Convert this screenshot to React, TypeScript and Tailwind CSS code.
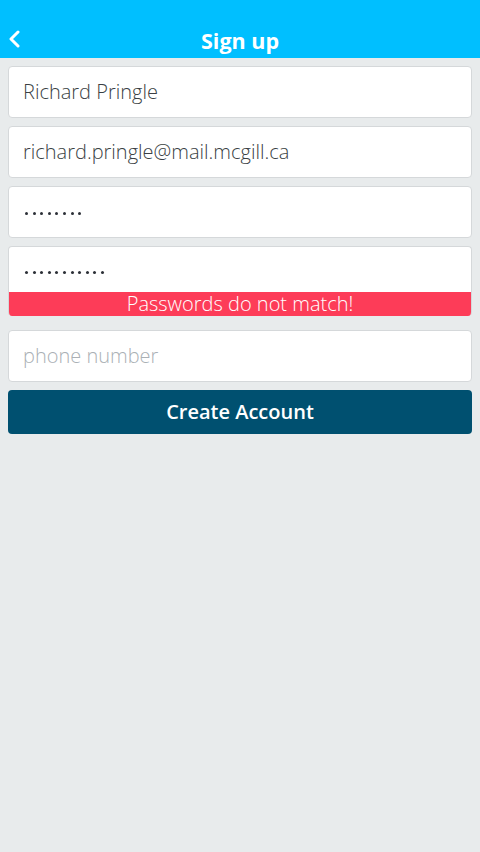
import React from "react";

const font = { fontFamily: '"Open Sans", "Noto Sans", sans-serif' };

function Field({ children, className = "" }: { children: React.ReactNode; className?: string }) {
  return (
    <div className={"h-[52px] rounded-[4px] border border-[#d5d8da] bg-white flex items-center pl-[14px] " + className}>
      {children}
    </div>
  );
}

function Dots({ n }: { n: number }) {
  return (
    <div className="flex gap-[4.6px] items-center">
      {Array.from({ length: n }).map((_, i) => (
        <span key={i} className="block w-[3px] h-[3px] rounded-full bg-[#2b2f36]" />
      ))}
    </div>
  );
}

export default function App() {
  return (
    <div className="w-[480px] h-[852px] bg-[#e8ebec] flex flex-col" style={font}>
      <div className="h-[58px] bg-[#00bfff] relative flex items-end justify-center pb-[2px]">
        <svg className="absolute left-[8px] top-[30px]" width="12" height="18" viewBox="0 0 12 18">
          <path d="M10 2 L3 9 L10 16" fill="none" stroke="white" strokeWidth="3" strokeLinecap="round" strokeLinejoin="round" />
        </svg>
        <span className="text-white font-bold text-[21.5px] leading-[30px]">Sign up</span>
      </div>
      <div className="flex flex-col px-[8px] pt-[8px]">
        <Field>
          <span className="text-[20px] font-light text-[#3a3f44]">Richard Pringle</span>
        </Field>
        <Field className="mt-[8px]">
          <span className="text-[20px] font-light text-[#3a3f44]">richard.pringle@mail.mcgill.ca</span>
        </Field>
        <Field className="mt-[8px]">
          <div className="pl-[2px] pt-[2px]"><Dots n={8} /></div>
        </Field>
        <div className="mt-[8px] rounded-[4px] border border-b-0 border-[#d5d8da] bg-white overflow-hidden">
          <div className="h-[45px] flex items-center pl-[14px] pt-[4px]">
            <div className="pl-[2px] pt-[2px]"><Dots n={11} /></div>
          </div>
          <div className="h-[24px] bg-[#fd3c58] text-white text-[20px] font-light leading-[24px] text-center">
            Passwords do not match!
          </div>
        </div>
        <Field className="mt-[14px]">
          <span className="text-[20px] text-[#aab0b5] font-light">phone number</span>
        </Field>
        <button className="mt-[8px] h-[44px] rounded-[4px] bg-[#005070] text-white text-[20px] font-semibold">
          Create Account
        </button>
      </div>
    </div>
  );
}
